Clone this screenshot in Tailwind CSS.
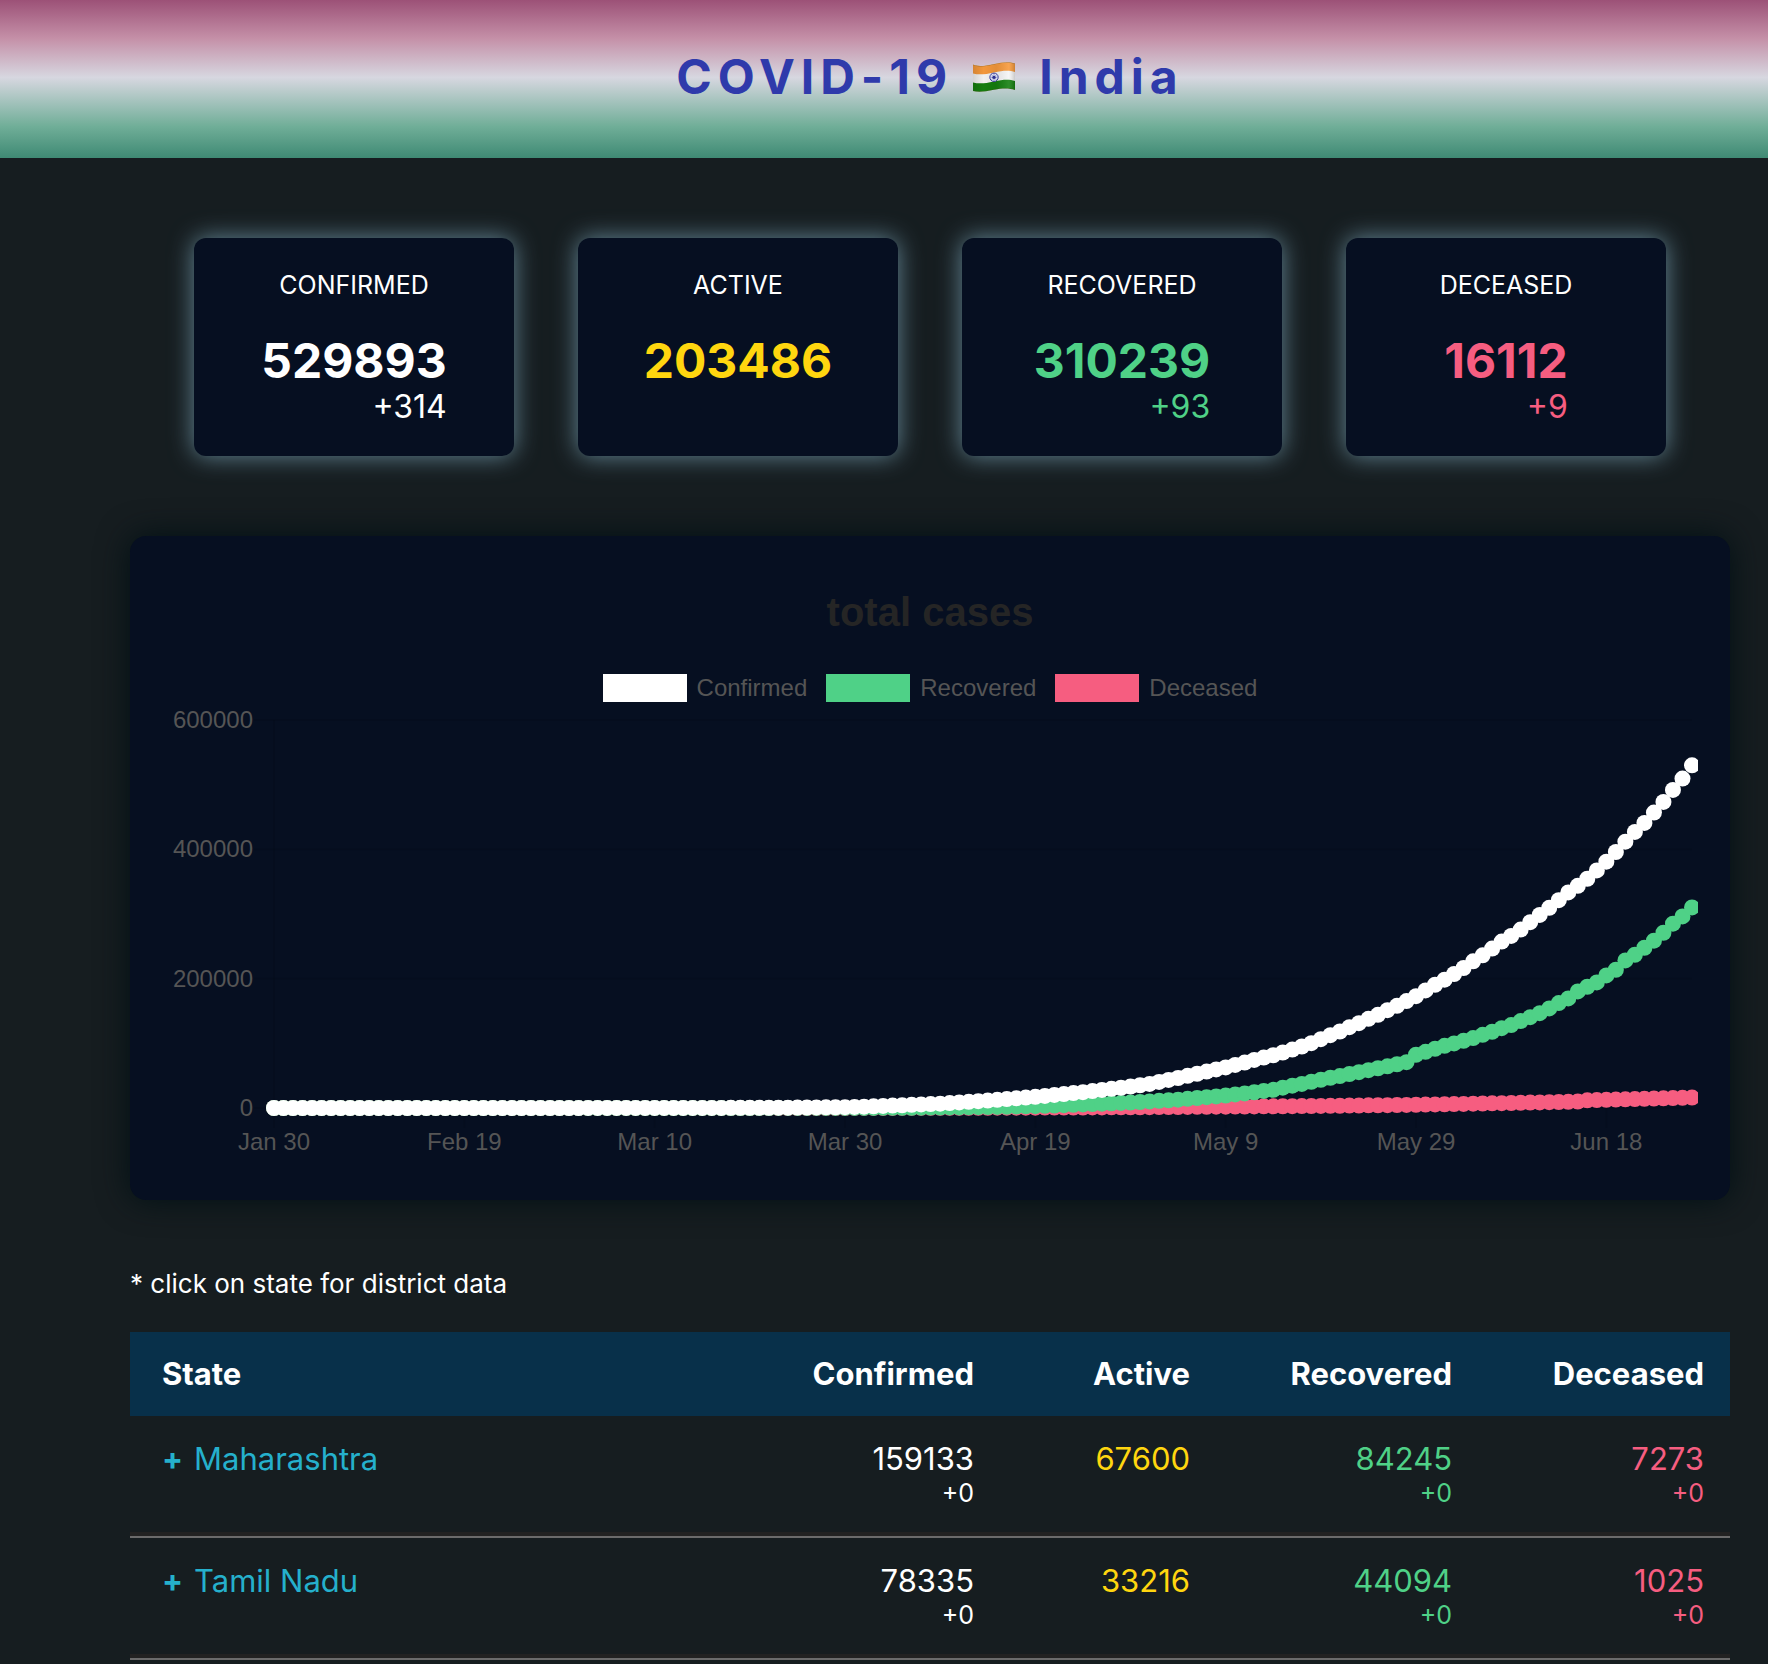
<!DOCTYPE html>
<html lang="en">
<head>
<meta charset="utf-8">
<meta name="viewport" content="width=device-width, initial-scale=1">
<title>COVID-19 India</title>
<script src="https://cdn.jsdelivr.net/npm/@tailwindcss/browser@4"></script>
</head>
<body class="min-h-screen overflow-x-hidden bg-[#161d20] font-['Inter',sans-serif] text-white">
<header class="flex h-[158px] items-center justify-center bg-[linear-gradient(#9c5177,#c48fa7_24%,#d7d7e0_49%,#70ae98_80%,#3f8a74)] pr-[38px] pb-1 pl-[130px]">
  <h1 class="flex items-center text-[48px] leading-[56px] font-bold tracking-[6px] text-[#2f3aab]">
    <span>COVID-19</span>
    <svg class="mr-[24px] ml-[20px] h-[30px] w-[42px]" viewBox="0 0 42 30" role="img" aria-label="Flag of India">
      <defs>
        <clipPath id="wave"><path d="M0 2.500C5 4.500 10 4.500 20 2.200S36-.5 42 1.500V28C36 26 30 26 21 27.800S6 30.500 0 29Z"/></clipPath>
        <linearGradient id="shade" x1="0" x2="1" y1="0" y2="0"><stop offset="0" stop-color="#000" stop-opacity=".14"/><stop offset=".25" stop-color="#000" stop-opacity=".02"/><stop offset=".55" stop-color="#000" stop-opacity=".08"/><stop offset=".85" stop-color="#fff" stop-opacity=".1"/><stop offset="1" stop-color="#000" stop-opacity=".18"/></linearGradient>
      </defs>
      <g clip-path="url(#wave)">
        <rect width="42" height="30" fill="#f5f5f5"/>
        <path d="M0 0H42V10C36 8 30 8.500 21 10.500S6 13 0 11.500Z" fill="#f79a3c"/>
        <path d="M0 20.500C6 22 12 21.500 21 19.500S36 17 42 19V30H0Z" fill="#15800f"/>
        <rect width="42" height="30" fill="url(#shade)"/>
        <path d="M0 29C6 30.500 12 29.600 21 27.800S36 26 42 28M0 2.500C5 4.500 10 4.500 20 2.200S36-.5 42 1.500" fill="none" stroke="#5a4a20" stroke-opacity=".5"/>
      </g>
      <circle cx="21" cy="15.300" r="4.200" fill="#dfe2f2" stroke="#3a3f9c" stroke-width="1"/>
      <path d="M21 11.500V19M17.300 15.300H24.700M18.400 12.700L23.600 17.900M23.600 12.700L18.400 17.900" stroke="#3a3f9c" stroke-width=".4"/>
      <circle cx="21" cy="15.300" r="1.600" fill="#2b2f8c"/>
    </svg>
    <span>India</span>
  </h1>
</header>

<main class="pr-[38px] pl-[130px]">
  <section class="grid grid-cols-4 gap-16 px-16 py-20">
    <article class="flex flex-col items-center rounded-xl bg-[#060f21] pt-8 pb-[27px] shadow-[0_0_24px_#658898]">
      <h2 class="text-[25px] leading-[30px]">CONFIRMED</h2>
      <div class="mt-[37px] text-right">
        <p class="text-[48px] leading-[48px] font-bold">529893</p>
        <p class="text-[32px] leading-[44px]">+314</p>
      </div>
    </article>
    <article class="flex flex-col items-center rounded-xl bg-[#060f21] pt-8 pb-[27px] shadow-[0_0_24px_#658898]">
      <h2 class="text-[25px] leading-[30px]">ACTIVE</h2>
      <div class="mt-[37px] text-right text-[#ffd60f]">
        <p class="text-[48px] leading-[48px] font-bold">203486</p>
      </div>
    </article>
    <article class="flex flex-col items-center rounded-xl bg-[#060f21] pt-8 pb-[27px] shadow-[0_0_24px_#658898]">
      <h2 class="text-[25px] leading-[30px]">RECOVERED</h2>
      <div class="mt-[37px] text-right text-[#4fd187]">
        <p class="text-[48px] leading-[48px] font-bold">310239</p>
        <p class="text-[32px] leading-[44px]">+93</p>
      </div>
    </article>
    <article class="flex flex-col items-center rounded-xl bg-[#060f21] pt-8 pb-[27px] shadow-[0_0_24px_#658898]">
      <h2 class="text-[25px] leading-[30px]">DECEASED</h2>
      <div class="mt-[37px] text-right text-[#f65d80]">
        <p class="text-[48px] leading-[48px] font-bold">16112</p>
        <p class="text-[32px] leading-[44px]">+9</p>
      </div>
    </article>
  </section>

  <section class="rounded-2xl bg-[#060f21] px-8 pt-14 pb-8 font-['Liberation_Sans',Arial,sans-serif] shadow-[0_0_32px_#001014]">
    <h2 class="text-center text-[40px] leading-[40px] font-bold text-[#252525]">total cases</h2>
    <ul class="mt-[42px] flex h-7 items-center justify-center gap-[19px] text-2xl leading-7 text-[#555]">
      <li class="flex gap-[10px]"><span class="h-7 w-[84px] bg-white"></span>Confirmed</li>
      <li class="flex gap-[10px]"><span class="h-7 w-[84px] bg-[#4fd187]"></span>Recovered</li>
      <li class="flex gap-[10px]"><span class="h-7 w-[84px] bg-[#f65d80]"></span>Deceased</li>
    </ul>
    <svg id="chart" class="block h-auto w-full overflow-hidden" viewBox="0 0 1536 466" role="img" aria-label="Total cases from Jan 30 to Jun 27">
      <g id="grid" stroke="#000" stroke-opacity=".07" stroke-width="2"></g>
      <g id="axis" class="text-2xl" fill="#555"></g>
      <g id="points"></g>
    </svg>
  </section>

  <p class="mt-[68px] text-[26px] leading-8">* click on state for district data</p>

  <table class="mt-8 w-full table-fixed border-separate border-spacing-0 text-right">
    <colgroup><col><col class="w-[230px]"><col class="w-[216px]"><col class="w-[262px]"><col class="w-[252px]"></colgroup>
    <thead class="bg-[#08304a] text-[31px] leading-[84px]">
      <tr>
        <th class="pl-8 text-left font-bold" scope="col">State</th>
        <th class="pr-[26px] font-bold" scope="col">Confirmed</th>
        <th class="pr-[26px] font-bold" scope="col">Active</th>
        <th class="pr-[26px] font-bold" scope="col">Recovered</th>
        <th class="pr-[26px] font-bold" scope="col">Deceased</th>
      </tr>
    </thead>
    <tbody class="text-[31px] leading-[36px]">
      <tr class="h-[122px] align-top shadow-[inset_0_-2px_#6b6b6b,inset_0_-6px_#222222]">
        <td class="pt-[25px] pl-8 text-left"><button class="flex gap-[11px] text-[#25b0cc]"><span class="font-bold">+</span>Maharashtra</button></td>
        <td class="pt-[25px] pr-[26px]">159133<div class="text-[25px] leading-[32px]">+0</div></td>
        <td class="pt-[25px] pr-[26px] text-[#ffd60f]">67600</td>
        <td class="pt-[25px] pr-[26px] text-[#4fd187]">84245<div class="text-[25px] leading-[32px]">+0</div></td>
        <td class="pt-[25px] pr-[26px] text-[#f65d80]">7273<div class="text-[25px] leading-[32px]">+0</div></td>
      </tr>
      <tr class="h-[122px] align-top shadow-[inset_0_-2px_#6b6b6b,inset_0_-6px_#222222]">
        <td class="pt-[25px] pl-8 text-left"><button class="flex gap-[11px] text-[#25b0cc]"><span class="font-bold">+</span>Tamil Nadu</button></td>
        <td class="pt-[25px] pr-[26px]">78335<div class="text-[25px] leading-[32px]">+0</div></td>
        <td class="pt-[25px] pr-[26px] text-[#ffd60f]">33216</td>
        <td class="pt-[25px] pr-[26px] text-[#4fd187]">44094<div class="text-[25px] leading-[32px]">+0</div></td>
        <td class="pt-[25px] pr-[26px] text-[#f65d80]">1025<div class="text-[25px] leading-[32px]">+0</div></td>
      </tr>
    </tbody>
  </table>
</main>

<script>
// Plot geometry, in viewBox units
const X0 = 112, X1 = 1530, DAYS = 150, Y0 = 406, YTOP = 18, MAX = 600000;
const px = i => X0 + i * (X1 - X0) / (DAYS - 1);
const py = v => Y0 - v * (Y0 - YTOP) / MAX;
const NS = 'http://www.w3.org/2000/svg';
function add(parent, name, attrs, text) {
  const el = document.createElementNS(NS, name);
  for (const k in attrs) el.setAttribute(k, attrs[k]);
  if (text) el.textContent = text;
  document.getElementById(parent).appendChild(el);
}

// Each series is a list of [day since Jan 30, total]; the days between are interpolated
const tail = list => list.map((v, i) => [149 - i, v * 1000]).reverse();
const confirmed = [[0,1],[40,60],[50,250],[55,657],[60,1326],[62,2059],[66,4293],[70,6728],[75,11485],[80,17305],[85,24447],[90,33065],[92,37262],[95,46434],[97,52987]]
  .concat(tail([529.9,509.4,491.9,473.3,456.8,440.8,426.9,411.9,395.9,380.9,367.4,354.5,343.6,333.3,321.4,309.5,298.6,287.3,275.9,266.1,257.3,246.5,236.1,226.8,216.5,207.2,198.4,190.6,181.8,173,165.3,158,151.3,144.1,137.9,131.2,125,118.3,112.6,106.4,100.2,95.1,90.4,85.8,81.6,78,74.4,70.3,66.6,62.8,59.6,56.3]));
const recovered = [[0,0],[50,20],[60,137],[65,230],[70,700],[75,1360],[80,2850],[85,5500],[90,8400],[95,12850]]
  .concat(tail([310.2,296.3,285,271,258.7,247.8,237,228.2,213.8,205,194.2,187.5,180.3,169.4,162.2,154,146.7,140.5,134.4,128.2,123.5,117.9,113.2,108.1,104,99.8,96.2,91.6,86.9,82.3,70.9,67.7,64.4,61.5,58.5,55.4,52.6,49.4,46.8,43.7,40.6,37.2,34.5,31.5,28.1,26.4,24.4,22.6,21,19.3,17.9,16.8]));
const deceased = [[0,0],[60,45],[80,560],[90,1080],[100,2100],[110,3160],[120,4980],[130,7750],[137,9917],[138,11921],[140,12604],[149,16112]];

[[0,'0'],[200000,'200000'],[400000,'400000'],[600000,'600000']].forEach(([v, label]) => {
  add('grid', 'line', {x1: 92, x2: X1, y1: py(v), y2: py(v)});
  add('axis', 'text', {x: 91, y: py(v) + 8, 'text-anchor': 'end'}, label);
});
// Only the first day has a line over the whole plot; the others have a tick under the axis
['Jan 30','Feb 19','Mar 10','Mar 30','Apr 19','May 9','May 29','Jun 18'].forEach((label, i) => {
  add('grid', 'line', {x1: px(i * 20), x2: px(i * 20), y1: i ? Y0 : YTOP, y2: Y0 + 20});
  add('axis', 'text', {x: px(i * 20), y: 448, 'text-anchor': 'middle'}, label);
});
[[deceased,'#f65d80'],[recovered,'#4fd187'],[confirmed,'#ffffff']].forEach(([keys, fill]) => {
  let k = 0;
  for (let d = 0; d < DAYS; d++) {
    while (k < keys.length - 2 && keys[k + 1][0] <= d) k++;
    const [a, va] = keys[k], [b, vb] = keys[k + 1];
    add('points', 'circle', {cx: px(d), cy: py(va + (vb - va) * (d - a) / (b - a)), r: 8, fill});
  }
});
</script>
</body>
</html>
